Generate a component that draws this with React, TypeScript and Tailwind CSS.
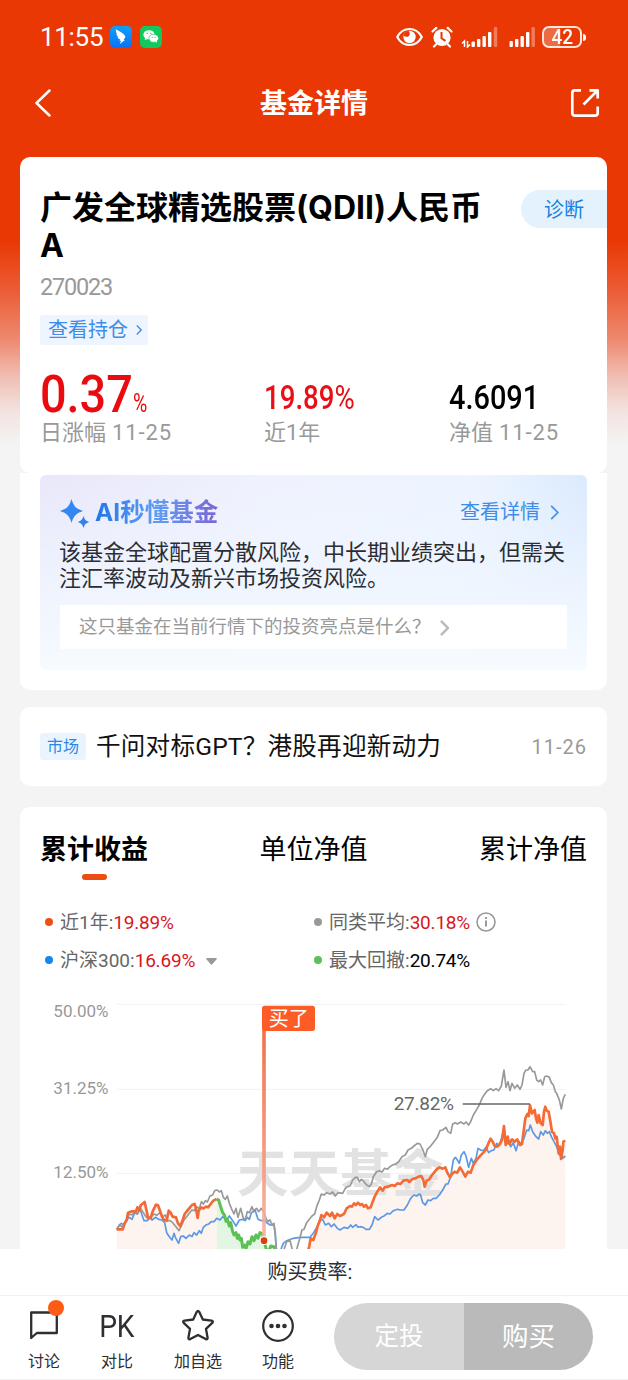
import type { ReactNode } from "react";
import { clsx } from "clsx";

/* Chart series, in chart units (3 units = 1 css pixel). */
const ORANGE_LEFT =
  "50,718 68,718 74,700 80,690 84,668 96,664 108,664 112,652 118,662 122,646 134,636 138,655 144,682 152,684 158,664 168,644 174,646 180,662 186,680 192,690 200,692 206,662 212,668 218,680 228,682 234,700 241,708 248,690 254,672 262,662 270,652 276,645 284,642 288,656 293,684 296,662 304,652 310,655 318,650 324,652 332,642 340,632 350,627";
const GREEN =
  "350,627 356,630 362,650 368,668 374,676 378,694 382,688 388,708 392,698 398,725 402,735 408,728 412,745 416,735 420,750 424,745 428,772 434,765 438,776 444,755 450,762 456,740 462,752 468,735 474,745 480,728 488,732 492,752 498,775 505,790 512,768 522,770 526,790";
const ORANGE_RIGHT =
  "622,790 628,768 632,745 640,750 648,728 654,705 660,690 664,675 672,682 680,668 690,678 696,668 704,685 712,672 720,678 732,672 740,655 750,648 756,650 762,640 768,645 774,638 780,645 786,642 792,650 798,645 804,655 812,652 818,635 824,620 832,605 840,592 848,602 854,592 864,590 876,585 884,588 892,580 902,582 910,572 922,570 928,576 936,568 946,565 956,560 964,558 970,570 974,590 980,572 988,568 996,555 1002,548 1010,538 1018,532 1028,536 1036,532 1042,548 1050,562 1056,552 1064,545 1072,548 1080,532 1088,545 1096,560 1104,545 1112,548 1120,525 1130,510 1140,498 1150,488 1158,478 1166,458 1172,446 1178,455 1184,468 1192,470 1200,462 1206,450 1212,408 1217,465 1223,440 1228,462 1236,448 1244,455 1252,448 1260,465 1266,462 1270,430 1276,385 1282,372 1286,378 1290,346 1296,370 1304,360 1308,385 1312,398 1316,375 1322,400 1328,405 1332,365 1336,350 1340,362 1346,365 1352,400 1356,425 1362,430 1366,445 1370,440 1376,490 1380,470 1383,507 1388,480 1390,455 1396,452";
const BLUE =
  "50,718 58,705 64,700 70,704 80,690 88,682 96,688 104,668 112,672 120,655 126,675 132,692 142,692 150,682 156,690 166,682 176,688 186,690 194,698 200,728 208,740 216,750 222,730 226,742 236,760 242,740 250,738 258,745 268,735 276,740 282,728 290,735 298,722 304,730 310,712 318,705 326,702 334,695 342,695 350,685 360,690 368,680 380,690 388,678 398,692 408,708 418,690 428,688 436,692 442,682 448,688 454,668 466,662 474,688 484,692 494,690 500,698 510,705 522,705 526,730 530,790 538,790 550,760 560,752 580,745 600,742 630,742 640,730 650,712 662,690 668,688 676,705 686,700 694,710 702,702 712,715 720,720 732,712 744,715 752,705 758,712 768,704 774,712 780,710 790,712 798,718 808,718 816,705 824,680 834,690 844,682 852,678 862,670 870,672 880,662 892,658 902,660 912,660 922,645 932,625 942,615 950,618 958,612 962,615 968,638 976,645 984,630 992,632 1000,625 1008,625 1018,615 1028,600 1038,582 1044,582 1052,560 1060,510 1066,502 1072,510 1078,520 1084,495 1092,485 1098,498 1106,532 1114,505 1120,520 1128,505 1134,475 1142,480 1150,482 1158,472 1166,488 1174,482 1182,480 1190,460 1198,465 1206,440 1212,415 1218,465 1226,455 1232,470 1240,458 1248,482 1256,455 1264,460 1272,445 1280,420 1286,422 1291,405 1298,425 1308,440 1316,447 1322,425 1330,435 1336,422 1342,430 1348,425 1354,440 1362,455 1370,470 1378,495 1384,480 1388,505 1396,498";
const GRAY =
  "50,718 60,705 68,712 80,690 88,672 96,675 104,665 112,672 122,655 130,668 138,680 146,688 154,680 162,672 170,676 180,668 188,680 196,675 202,692 210,692 218,698 228,710 237,722 244,708 252,690 260,680 266,672 276,660 282,662 290,650 298,656 304,635 310,642 316,632 322,636 330,618 338,615 344,602 352,600 358,606 364,602 370,622 376,628 382,618 388,640 394,655 402,672 408,655 414,682 422,655 430,685 436,688 442,665 448,668 456,650 460,662 470,655 476,665 484,655 492,668 498,685 504,695 510,690 516,705 522,700 526,740 530,790 548,790 560,755 570,752 580,790 588,785 598,750 606,720 612,718 620,698 628,688 636,678 644,672 650,650 658,630 664,612 672,615 680,608 690,612 698,606 706,618 714,608 728,610 736,595 742,590 750,588 758,570 766,562 772,562 778,575 784,568 792,575 800,585 808,590 814,582 820,560 830,545 838,542 846,546 854,535 862,538 870,530 878,525 888,522 896,515 906,500 916,495 924,480 934,475 942,468 952,460 960,462 968,478 976,500 982,478 992,468 1002,455 1012,442 1020,422 1028,420 1038,412 1044,425 1052,430 1058,402 1066,398 1072,402 1082,396 1092,402 1098,396 1106,405 1112,395 1120,375 1128,362 1138,345 1146,325 1154,312 1162,302 1172,296 1180,302 1188,296 1196,302 1204,288 1212,240 1218,292 1224,275 1230,302 1236,280 1244,295 1252,285 1260,298 1266,285 1272,250 1278,240 1284,240 1290,230 1298,245 1304,245 1310,270 1316,275 1322,270 1328,285 1334,260 1340,258 1348,262 1354,278 1360,285 1366,305 1370,310 1374,320 1378,330 1384,357 1390,325 1396,313";

function Chevron({ className, width = 2 }: { className?: string; width?: number }) {
  return (
    <svg viewBox="0 0 10 18" className={className} fill="none" stroke="currentColor" strokeWidth={width}>
      <path d="M1 1l8 8-8 8" />
    </svg>
  );
}

function StatusBar() {
  return (
    <div className="flex h-[74px] items-center pl-10 pr-[42px] text-white">
      <span className="w-[70px] text-[26px] leading-none tracking-[-0.3px]">11:55</span>
      <svg className="h-[22px] w-[22px]" viewBox="0 0 22 22">
        <defs>
          <linearGradient id="ding" x1="0" y1="0" x2="0" y2="1">
            <stop offset="0" stopColor="#10a0fa" />
            <stop offset="1" stopColor="#0a72f8" />
          </linearGradient>
        </defs>
        <rect width="22" height="22" rx="5" fill="url(#ding)" />
        <path d="M5.800 3.200c4 2 7 4 9 6.200.8.900.6 1.700 0 2.600l-1.200 1.900h1.300l-5 4 1.100-3.200H9.500l.8-1.300c-1.500-.4-2.400-1.300-2.900-2.400l1.100.1C7.400 10.400 6.600 9.300 6.300 8.200l.9.200C6.300 6.800 5.800 5 5.800 3.200z" fill="#fff" />
      </svg>
      <svg className="ml-2 h-[22px] w-[22px]" viewBox="0 0 22 22">
        <rect width="22" height="22" rx="5" fill="#12c95f" />
        <ellipse cx="9" cy="8.800" rx="5.600" ry="4.600" fill="#fff" />
        <path d="M5 12l-.3 2.300 2.500-1.200z" fill="#fff" />
        <ellipse cx="13.700" cy="12.300" rx="4.800" ry="4" fill="#fff" stroke="#12c95f" strokeWidth=".7" />
        <path d="M15 15.500l2 1.300-.4-2z" fill="#fff" />
        <g fill="#12c95f">
          <circle cx="7.100" cy="7.400" r=".7" />
          <circle cx="10.900" cy="7.400" r=".7" />
          <circle cx="12.200" cy="11.300" r=".6" />
          <circle cx="15.200" cy="11.300" r=".6" />
        </g>
      </svg>

      <div className="ml-auto flex items-center">
        <svg className="h-5 w-[27px]" viewBox="0 0 27 20">
          <path d="M1.200 10C4 4.800 8.300 2 13.500 2S23 4.800 25.800 10C23 15.200 18.700 18 13.500 18S4 15.200 1.200 10z" fill="none" stroke="#fff" strokeWidth="2.200" />
          <circle cx="13.500" cy="10" r="6.200" fill="#fff" />
          <path d="M12.500 3.800c1.800 2 1.600 4.700-.2 5.600-1.500.8-3 .2-5-.4a6.400 6.400 0 0 1 5.200-5.200z" fill="#e93803" />
        </svg>
        <svg className="ml-2 h-[22px] w-[22px]" viewBox="0 0 22 22">
          <circle cx="11" cy="11.500" r="8.600" fill="#fff" />
          <path d="M1.500 5.500l3.800-3.600M20.500 5.500l-3.800-3.600M5 18.500l-2 2M17 18.500l2 2" stroke="#fff" strokeWidth="2.200" strokeLinecap="round" />
          <path d="M10.500 6v6.300l4 2.600" fill="none" stroke="#e93803" strokeWidth="2" />
        </svg>
        <svg className="ml-[8px] h-[22px] w-[37px]" viewBox="0 0 37 22">
          <path d="M3.500 21v-6L1 17.500M6.500 15v6L9 18.500" fill="none" stroke="#fff" strokeWidth="1.500" />
          <g fill="#fff">
            <rect x="10.500" y="15.500" width="3.400" height="5.500" rx="1" />
            <rect x="16" y="13" width="3.400" height="8" rx="1" />
            <rect x="21.500" y="10" width="3.400" height="11" rx="1" />
            <rect x="27" y="6" width="3.400" height="15" rx="1" />
            <rect x="32.800" y="1" width="3.400" height="20" rx="1" opacity=".35" />
          </g>
        </svg>
        <svg className="ml-[11px] h-[22px] w-[27px]" viewBox="0 0 27 22">
          <g fill="#fff">
            <rect x="0.500" y="15" width="3.400" height="6" rx="1" />
            <rect x="6" y="13" width="3.400" height="8" rx="1" />
            <rect x="11.500" y="10" width="3.400" height="11" rx="1" />
            <rect x="17" y="6" width="3.400" height="15" rx="1" />
            <rect x="22.500" y="1" width="3.400" height="20" rx="1" opacity=".35" />
          </g>
        </svg>
        <div className="ml-[6px] flex h-[22px] w-10 items-center justify-center rounded-[7px] border-2 border-white/85 bg-linear-to-r from-white/25 from-45% to-transparent to-45%">
          <span className="scale-x-95 text-[20px] font-medium leading-none">42</span>
        </div>
        <span className="ml-px h-[7px] w-[3px] rounded-r bg-white" />
      </div>
    </div>
  );
}

function NavBar() {
  return (
    <div className="flex h-[58px] items-center justify-between pl-[34px] pr-[28px] text-white">
      <svg className="h-7 w-[18px]" viewBox="0 0 18 28" fill="none" stroke="currentColor" strokeWidth="2.500" strokeLinecap="round" strokeLinejoin="round">
        <path d="M15.500 1.500L2.500 14l13 12.500" />
      </svg>
      <h1 className="pl-[6px] pt-[2px] text-[27px] font-bold leading-none">基金详情</h1>
      <svg className="h-[30px] w-[30px]" viewBox="0 0 30 30" fill="none" stroke="currentColor" strokeWidth="2.700" strokeLinejoin="round">
        <path d="M11 2.300H4.800A2.500 2.500 0 0 0 2.300 4.800v20.400a2.500 2.500 0 0 0 2.500 2.500h20.400a2.500 2.500 0 0 0 2.500-2.500V18.500" />
        <path d="M13.500 16.500L27 3M19.500 2.300h8.200v8.200" />
      </svg>
    </div>
  );
}

function FundCard() {
  return (
    <div className="h-[316px] rounded-[10px] bg-white pt-[32px]">
      <div className="flex h-[76px] justify-between pl-5">
        <h2 className="w-[460px] whitespace-nowrap text-[32px] font-bold leading-[38px] text-black">
          广发全球精选股票
          <span className="font-[Inter,sans-serif] leading-none">(QDII)</span>
          人民币
          <br />
          <span className="font-[Inter,sans-serif] leading-none">A</span>
        </h2>
        <div className="mt-px flex h-[38px] w-[86px] items-center rounded-l-full bg-[#e4f2fe] pl-[23px] pt-px text-[20px] leading-none text-[#1682e0]">
          诊断
        </div>
      </div>
      <div className="mt-[11px] flex h-6 items-center pl-5 text-[23.500px] leading-none tracking-[-1.2px] text-[#999]">
        270023
      </div>
      <div className="ml-5 mt-[15px] flex h-[30px] w-[108px] items-center rounded-[3px] bg-[#eef5fe] pl-2 text-[20px] leading-none text-[#3f8de8]">
        查看持仓
        <Chevron className="ml-2 h-[10px] w-[6px]" width={2.4} />
      </div>
      <div className="mt-[24px] flex pl-5">
        <Stat
          className="w-[224px]"
          label="日涨幅"
          date="11-25"
          value={
            <span className="flex items-baseline text-[#ea0b10]">
              <span className="w-[93px] origin-left scale-x-90 text-[52px] font-medium leading-[49px]">0.37</span>
              <span className="origin-left scale-x-75 text-[26px] leading-none">%</span>
            </span>
          }
        />
        <Stat
          className="w-[185px]"
          label="近1年"
          value={
            <span className="origin-left scale-x-[0.85] text-[32.500px] font-medium leading-[41px] text-[#e81016]">
              19.89<span className="font-normal">%</span>
            </span>
          }
        />
        <Stat
          label="净值"
          date="11-25"
          value={<span className="origin-left scale-x-[0.89] text-[32.500px] font-medium leading-[41px] text-black">4.6091</span>}
        />
      </div>
    </div>
  );
}

function Stat({ label, date, value, className }: { label: string; date?: string; value: ReactNode; className?: string }) {
  return (
    <div className={clsx("flex flex-col", className)}>
      <div className="flex h-[50px] items-end whitespace-nowrap">{value}</div>
      <div className="-mt-[2px] flex h-8 items-center whitespace-nowrap text-[22px] leading-none text-[#999]">
        {label}
        {date && <span className="ml-[6px] tracking-[0.9px]">{date}</span>}
      </div>
    </div>
  );
}

function AiCard() {
  return (
    <div className="h-[217px] rounded-b-[10px] bg-white px-5 pt-[2px]">
      <div className="h-[195px] rounded-[6px] bg-[linear-gradient(to_bottom,rgba(243,249,255,0)_0%,rgba(240,246,255,0.85)_60%,#f6fbff_100%),linear-gradient(100deg,#e9e7fa_0%,#eff2fe_40%,#edf4ff_75%,#d5e7fe_100%)] px-5 pt-[22px]">
        <div className="flex h-[30px] items-center justify-between">
          <div className="flex items-center">
            <svg className="mt-1 h-[30px] w-[31px]" viewBox="0 0 31 30">
              <defs>
                <linearGradient id="spark" x1="0" y1="0" x2="1" y2="1">
                  <stop offset="0" stopColor="#2f8ff8" />
                  <stop offset="1" stopColor="#3a7be8" />
                </linearGradient>
              </defs>
              <path d="M11.500 0C13.500 7 16 9.700 23 12c-7 2.300-9.500 5-11.500 12C9.500 17 7 14.300 0 12c7-2.300 9.500-5 11.500-12zM23.500 17c1 3.400 2.400 5 5.700 6-3.300 1-4.700 2.600-5.700 6-1-3.400-2.400-5-5.700-6 3.300-1 4.700-2.600 5.700-6z" fill="url(#spark)" />
            </svg>
            <span className="ml-1 mt-[2px] bg-linear-to-r from-[#1c77e6] via-[#5f9df5] to-[#7866d4] bg-clip-text text-[24.500px] font-bold leading-[30px] text-transparent">
              <span className="font-[Inter,sans-serif] leading-none">AI</span>秒懂基金
            </span>
          </div>
          <div className="flex items-center pr-[8px] text-[20px] leading-none text-[#3f8de8]">
            查看详情
            <Chevron className="ml-[10px] h-[15px] w-[9px]" />
          </div>
        </div>
        <p className="-ml-px mt-[13px] whitespace-nowrap text-[22px] leading-[26px] text-[#2b2d33]">
          该基金全球配置分散风险，中长期业绩突出，但需关
          <br />
          注汇率波动及新兴市场投资风险。
        </p>
        <div className="mt-[13px] flex h-11 w-[507px] items-center bg-white pl-[19px] pt-px text-[18.500px] leading-none text-[#999]">
          这只基金在当前行情下的投资亮点是什么？
          <Chevron className="ml-[9px] h-4 w-[9px] text-[#bbb]" width={2.8} />
        </div>
      </div>
    </div>
  );
}

function NewsCard() {
  return (
    <div className="mt-[17px] flex h-[79px] items-center rounded-[10px] bg-white px-5">
      <span className="flex h-[27px] w-[46px] items-center justify-center rounded-[3px] bg-[#e9f4ff] text-[16px] leading-none text-[#2a86e6]">
        市场
      </span>
      <span className="ml-[10px] pt-px text-[24.600px] leading-none tracking-[0.2px] text-[#111]">千问对标GPT？港股再迎新动力</span>
      <span className="ml-auto text-[20px] leading-none tracking-[1px] text-[#999]">11-26</span>
    </div>
  );
}

const dots = {
  orange: "bg-[#f04e14]",
  blue: "bg-[#1488f0]",
  gray: "bg-[#999]",
  green: "bg-[#5cc15c]",
};

function Legend({ dot, label, value, red, children }: { dot: keyof typeof dots; label: string; value: string; red?: boolean; children?: ReactNode }) {
  return (
    <div className="flex h-[38px] items-center text-[19px] leading-none text-[#666]">
      <span className={clsx("mr-[7px] h-2 w-2 rounded-full", dots[dot])} />
      {label}:<span className={clsx("tracking-[-0.2px]", red ? "text-[#d9161c]" : "text-black")}>{value}</span>
      {children}
    </div>
  );
}

function Chart() {
  return (
    <svg className="block h-[259px] w-[587px]" viewBox="-240 0 1761 777">
      <defs>
        <linearGradient id="pole" x1="0" y1="0" x2="0" y2="1">
          <stop offset="0" stopColor="#f0653a" />
          <stop offset="1" stopColor="#f7b4a0" />
        </linearGradient>
      </defs>
      <g stroke="#f2f2f2" strokeWidth="3">
        <path d="M50 43H1396M50 298H1396M50 550H1396" />
      </g>
      <g fill="#fdf3ef">
        <polygon points={`50,790 ${ORANGE_LEFT} 350,790`} />
        <polygon points={`${ORANGE_RIGHT} 1396,790`} />
      </g>
      <polygon points={`350,790 ${GREEN}`} fill="#e3f5e3" />
      <text x="411" y="607" fontSize="154" fontWeight="700" fill="#e2e2e2" textLength="620" className="font-['Noto_Sans_CJK_SC',sans-serif]">
        天天基金
      </text>
      <g fill="none" strokeLinejoin="round">
        <polyline points={BLUE} stroke="#5b98e6" strokeWidth="5" />
        <polyline points={GRAY} stroke="#999" strokeWidth="5" />
        <polyline points={ORANGE_LEFT} stroke="#f06a38" strokeWidth="8" />
        <polyline points={ORANGE_RIGHT} stroke="#f56b36" strokeWidth="8" />
        <polyline points={GREEN} stroke="#5cc052" strokeWidth="9" />
      </g>
      <rect x="486" y="120" width="12" height="632" fill="url(#pole)" opacity=".75" />
      <rect x="490" y="120" width="4" height="632" fill="url(#pole)" />
      <rect x="486" y="47" width="159" height="76" rx="8" fill="#fd5c26" />
      <text x="566" y="108" fontSize="60" fill="#fff" textAnchor="middle">买了</text>
      <circle cx="492" cy="752" r="13" fill="#fff" />
      <circle cx="492" cy="752" r="10" fill="#d9400f" />
      <path d="M1088 342H1290" stroke="#666" strokeWidth="5" />
      <text x="881" y="360" fontSize="57" fill="#666" textLength="181">27.82%</text>
      <g fontSize="51" fill="#999">
        <text x="-140" y="82">50.00%</text>
        <text x="-140" y="312">31.25%</text>
        <text x="-140" y="565">12.50%</text>
      </g>
    </svg>
  );
}

function PerformanceCard() {
  return (
    <div className="mt-[21px] h-[442px] overflow-hidden rounded-t-[10px] bg-white">
      <div className="flex justify-between px-5 pt-[23px] text-[27px] leading-[40px] text-black">
        <div className="flex flex-col items-center font-bold">
          累计收益
          <span className="mt-[4px] h-[6px] w-[25px] rounded-full bg-[#ee4c12]" />
        </div>
        <div>单位净值</div>
        <div>累计净值</div>
      </div>
      <div className="mt-[23px] grid h-[76px] grid-cols-[269px_1fr] pl-[25px]">
        <Legend dot="orange" label="近1年" value="19.89%" red />
        <Legend dot="gray" label="同类平均" value="30.18%" red>
          <svg className="ml-[6px] h-5 w-5" viewBox="0 0 20 20" fill="none" stroke="#999" strokeWidth="1.600">
            <circle cx="10" cy="10" r="9" />
            <path d="M10 8.500v6M10 5v2" strokeWidth="2" />
          </svg>
        </Legend>
        <Legend dot="blue" label="沪深300" value="16.69%" red>
          <svg className="ml-[11px] mt-[2px] h-[7px] w-[11px]" viewBox="0 0 11 7">
            <path d="M1 0h9c.8 0 1.200.7.6 1.300L6.300 6.300c-.4.500-1.200.5-1.600 0L.4 1.300C-.2.700.2 0 1 0z" fill="#999" />
          </svg>
        </Legend>
        <Legend dot="green" label="最大回撤" value="20.74%" />
      </div>
      <div className="mt-[11px]">
        <Chart />
      </div>
    </div>
  );
}

function ToolItem({ label, className, children }: { label: string; className?: string; children: ReactNode }) {
  return (
    <div className={clsx("flex flex-col items-center", className)}>
      <div className="relative flex h-[34px] items-center justify-center">{children}</div>
      <span className="mt-[11px] whitespace-nowrap text-[16px] leading-none">{label}</span>
    </div>
  );
}

function BottomBar() {
  return (
    <div className="bg-white text-[#2e2e33]">
      <div className="flex h-[47px] items-center justify-center border-b border-[#f1f1f1] pr-[8px] text-[20px] leading-none">
        购买费率:
      </div>
      <div className="flex h-[84px] items-start border-b border-[#f1f1f1] pt-[13px]">
        <ToolItem label="讨论" className="ml-[8px] w-[72px]">
          <svg className="h-[30px] w-[30px]" viewBox="0 0 30 30" fill="none" stroke="currentColor" strokeWidth="2.300" strokeLinejoin="round">
            <path d="M2.200 1.500h25.600v20.500H7.800l-5.600 5z" />
          </svg>
          <span className="absolute -right-[5px] -top-[9px] h-4 w-4 rounded-full bg-[#fd5b16]" />
        </ToolItem>
        <ToolItem label="对比" className="w-[74px]">
          <span className="scale-x-[0.88] text-[32px] leading-none tracking-[-0.5px]">PK</span>
        </ToolItem>
        <ToolItem label="加自选" className="w-[88px]">
          <svg className="h-[34px] w-[34px]" viewBox="0 0 34 34" fill="none" stroke="currentColor" strokeWidth="2.300" strokeLinejoin="round">
            <path d="M15.800 2.800q1.200-2 2.400 0l3.600 7.700 8.700 1.200q2.200.5.800 2.200l-6.300 6 1.600 8.800q.2 2.200-1.900 1.400L17 26l-7.700 4.100q-2.100.8-1.900-1.400L9 19.900l-6.300-6q-1.400-1.700.8-2.200l8.700-1.200z" />
          </svg>
        </ToolItem>
        <ToolItem label="功能" className="w-[72px]">
          <svg className="h-[34px] w-[34px]" viewBox="0 0 34 34">
            <circle cx="17" cy="17" r="14.800" fill="none" stroke="currentColor" strokeWidth="2.200" />
            <g fill="currentColor">
              <circle cx="10.500" cy="17" r="2.300" />
              <circle cx="17" cy="17" r="2.300" />
              <circle cx="23.500" cy="17" r="2.300" />
            </g>
          </svg>
        </ToolItem>
        <div className="-mt-[6px] ml-[20px] flex h-[67px] w-[259px] overflow-hidden rounded-full text-white">
          <button className="w-[130px] bg-[#d6d6d6] pt-[2px] text-[24.500px] leading-none">定投</button>
          <button className="flex-1 bg-[#bababa] pt-[2px] text-[26.500px] leading-none">购买</button>
        </div>
      </div>
    </div>
  );
}

export default function App() {
  return (
    <div className="h-[1380px] w-[628px] overflow-hidden bg-[linear-gradient(to_bottom,#e93803_0px,#e93803_240px,#eb5c35_290px,#ee8a70_340px,#f0bcb0_375px,#f2e2df_410px,#f4f4f4_445px)] font-[Roboto,'Noto_Sans_CJK_SC',sans-serif]">
      <StatusBar />
      <NavBar />
      <div className="px-5 pr-[21px] pt-[25px]">
        <FundCard />
        <AiCard />
        <NewsCard />
        <PerformanceCard />
      </div>
      <BottomBar />
    </div>
  );
}
